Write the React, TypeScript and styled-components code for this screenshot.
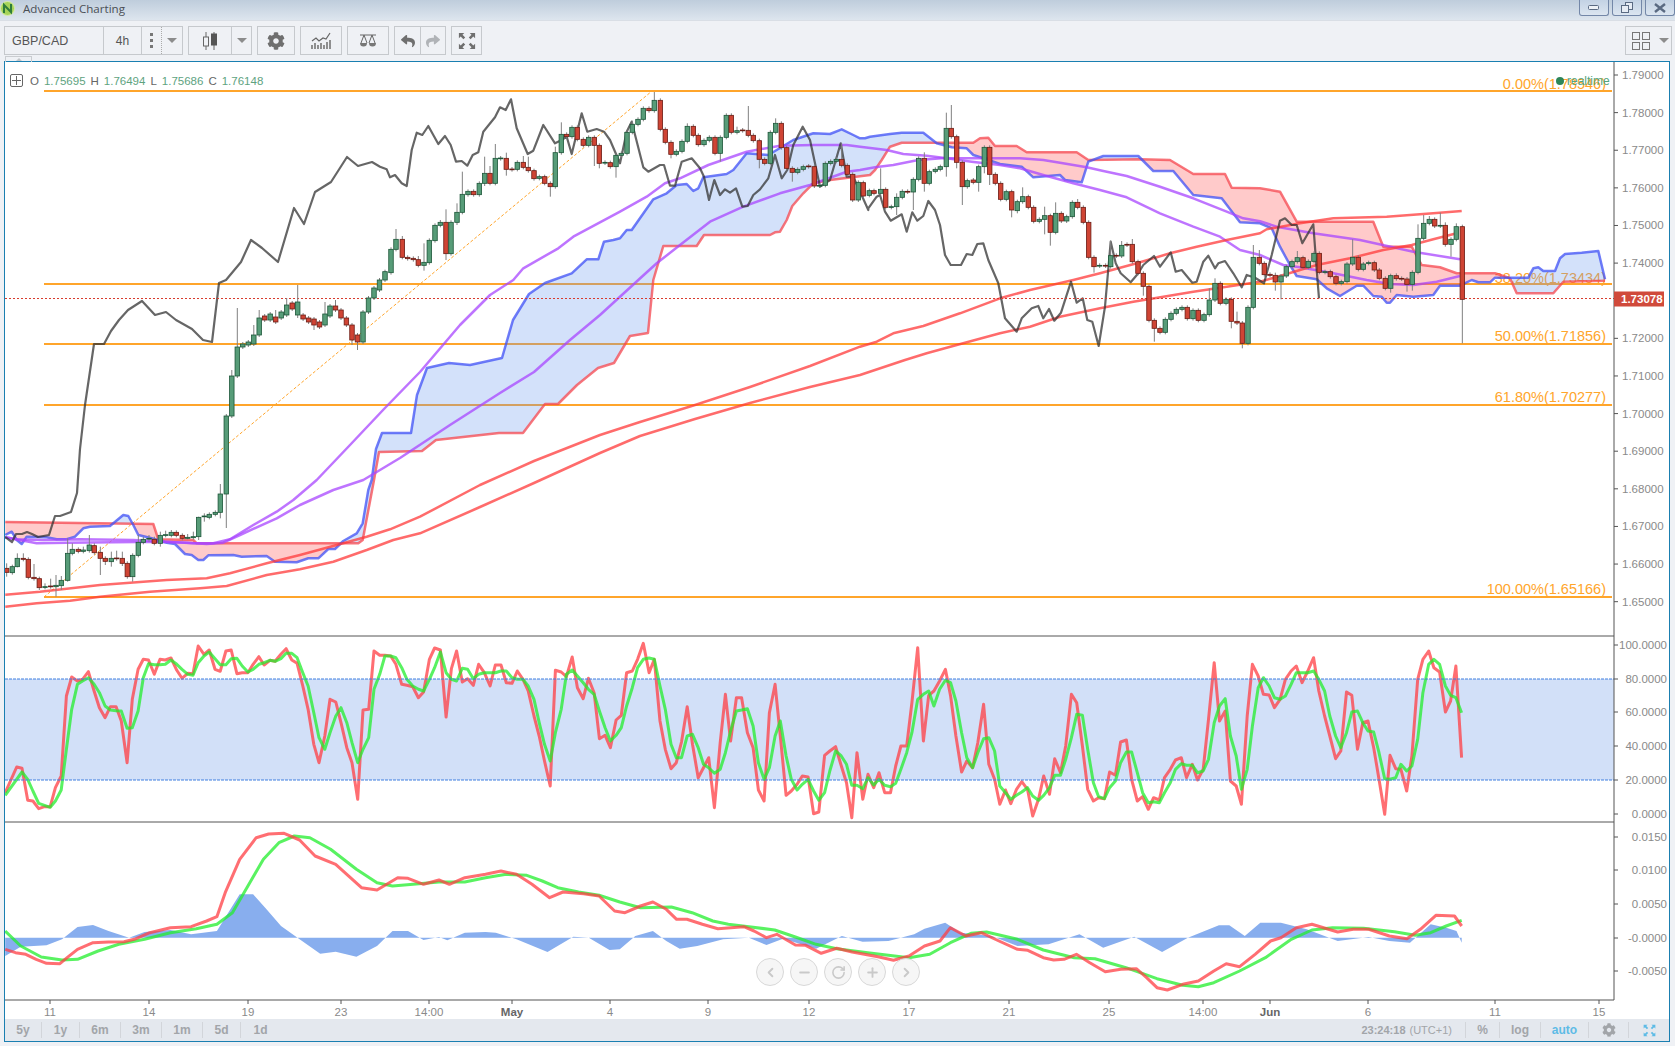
import React from 'react';
import styled, { createGlobalStyle } from 'styled-components';
import { ChevronLeft, ChevronRight, Minus, Plus, RotateCw } from 'lucide-react';
import { FaCog, FaReply, FaShare } from 'react-icons/fa';

type Pt = [number, number];

const GlobalStyle = createGlobalStyle`
  html, body { margin: 0; padding: 0; background: #eff1f5; overflow: hidden; }
  body { font-family: "Liberation Sans", Arial, sans-serif; }
`;

/* ---------- traced series: each block was read off at its own scale ---------- */
const tr = (x0: number, y0: number, sx: number, sy: number) => (s: string): Pt[] =>
  s.trim().split(/\s+/).map((p) => {
    const [x, y] = p.split(',').map(Number);
    return [x0 + x * sx, y0 + y * sy] as Pt;
  });

const Z7 = tr(0, 480, 1 / 3, 1 / 3);
const Z8 = tr(380, 80, 1 / 3, 1 / 3);
const Z11 = tr(860, 90, 1 / 3, 1 / 3);
const Z3 = tr(1200, 190, 1 / 3, 1 / 3);
const RAW = tr(0, 0, 1, 1);
const S1 = tr(0, 636, 1 / 1.912, 1 / 3);
const S2 = tr(800, 636, 1 / 1.912, 1 / 3);
const M = tr(0, 826, 1.033, 1 / 3);

const spanBlue: Pt[] = [
  ...Z7('16,165 35,155 50,180 65,192 80,170 140,172 170,178 200,178 225,170 250,145 270,140 330,138 370,105 385,108 400,135 415,165 455,175 500,188 525,192 555,222 575,225 595,240 610,240 625,226 700,225 725,230 800,228 825,245 890,247 925,235 955,235 985,207 1005,207 1030,183 1070,160 1088,130 1105,30 1115,0'),
  ...RAW('376,449 382,433 411,433 417,395 427,368 449,363 470,365 502,358 513,320 529,294 545,283'),
  ...Z8('520,600 575,580 620,538 655,538 672,485 700,480 720,475 740,450 755,450 820,358 860,340 890,315 920,312 940,333 955,325 970,292 1040,282 1060,270 1100,220 1165,225 1190,210 1240,180 1300,160 1350,162 1385,148 1420,165'),
  ...Z11('0,145 15,145 30,140 90,132 125,128 190,128 230,160 275,172 320,175 340,195 370,205 420,222 485,230 520,262 600,255 615,270 665,277 685,215 730,198 835,198 880,243 940,243 1000,315 1085,325 1140,397 1200,400'),
  ...Z3('215,115 240,170 270,225 290,258 350,268 380,295 420,318 470,287 490,287 520,318 545,320 560,338 570,338 590,315 640,320 700,315 720,287 780,287 815,270 835,277 870,277 885,263 985,263 1000,235 1015,232 1030,243 1065,243 1080,205 1095,192 1145,188 1195,183 1215,268'),
];

const spanRed: Pt[] = [
  ...Z7('16,126 460,132 475,178 580,180 590,190 1075,190 1088,180 1122,0'),
  ...RAW('379,452 422,451 436,440 499,433 523,433 545,404 558,404 577,385 598,368 614,363 630,336 648,333'),
  ...Z8('820,600 850,498 950,498 972,465 1170,465 1185,457 1200,455 1220,420 1237,378 1270,340 1300,310 1350,300 1470,285'),
  ...Z11('45,240 65,210 90,170 125,158 340,158 360,145 385,143 405,168 470,168 500,187 650,187 685,210 840,208 930,210 1000,252 1095,252 1115,293 1200,295'),
  ...Z3('240,5 290,95 520,95 550,170 635,170 665,225 720,232 770,250 885,250 930,265 950,310 1060,310 1090,275 1215,272'),
];

const maPurpleA: Pt[] = [
  ...Z7('16,172 50,178 130,180 240,178 400,180 500,185 580,190 640,190 690,178 760,135 830,95 880,60 950,0'),
  ...RAW('350,445 384,409 420,372 460,325 490,295'),
  ...Z8('400,600 430,565 535,505 580,470 720,395 800,350 855,310 900,295 985,255 1100,215 1200,197 1300,195 1400,195'),
  ...Z11('0,170 80,180 130,192 200,197 260,205 335,215 420,225 480,235 550,255 640,280 720,300 800,322 900,370 1000,410 1080,440 1140,480'),
  ...Z3('180,195 250,225 300,232 400,250 500,270 570,282 640,285 710,275 780,258'),
];

const maPurpleB: Pt[] = [
  ...Z7('16,172 110,190 200,188 480,185 560,188 620,192 670,188 720,165 830,115 900,75 1000,30 1090,0'),
  ...RAW('400,458 450,425 500,393 534,372 570,340 600,315'),
  ...Z8('775,600 830,550 900,495 990,425 1090,380 1200,340 1290,315 1400,275'),
  ...Z11('0,240 45,232 100,225 175,210 245,205 335,205 420,205 480,205 550,210 600,218 680,232 730,243 800,258 900,290 1000,325 1100,365 1150,385'),
  ...Z3('180,94 230,110 340,130 480,150 640,185 780,208'),
];

const maRedA: Pt[] = [
  ...Z7('16,344 120,335 300,315 500,300 620,295 690,280 800,250 900,225 1010,195 1100,170 1170,148 1260,110'),
  ...RAW('480,485 534,461 600,435 640,422 695,405 750,387 810,366'),
  ...Z11('0,770 50,755 100,730 190,708 300,670 420,625 510,600 640,570 720,550 830,520 930,490 1010,470 1100,450 1200,430'),
  ...Z3('200,118 300,100 400,85 560,80 700,70 785,63'),
];

const maRedB: Pt[] = [
  ...Z7('16,380 110,370 210,362 300,350 450,335 600,325 680,318 800,285 900,268 1000,245 1100,210 1180,180 1260,160'),
  ...RAW('480,507 534,483 600,453 640,436 695,419 750,403 810,387 860,375'),
  ...Z11('135,810 200,790 290,765 420,730 510,710 600,680 720,655 820,635 1000,605 1100,590 1200,575'),
  ...Z3('250,255 350,225 450,205 550,180 635,165 700,148 770,130'),
];

const lagging: Pt[] = [
  ...RAW('5,537 12,542 16,534 22,534 27,532 32,534 38,537 49,535 55,516 60,516 71,512 77,493 80,449 85,405 94,344 104,344 111,331 119,320 128,310 142,301 155,315 166,312 176,320 192,329 203,340 212,342 219,283 226,280 241,262 251,240 262,248 278,262 294,208 304,224 315,192 331,182 347,157 358,166 372,162'),
  ...Z8('0,260 20,268 30,292 45,285 65,310 80,318 95,210 110,158 127,165 145,138 175,192 195,168 212,195 228,245 245,243 262,257 278,225 295,217 310,155 345,112 360,82 377,90 393,58 410,145 443,222 460,212 490,135 525,190 545,180 560,170 575,222 605,100 622,155 650,147 672,155 690,180 720,250 740,155 755,125 790,262 805,275 840,255 852,255 870,317 885,317 905,245 935,235 960,265 972,290 987,360 1003,300 1020,345 1035,328 1050,338 1068,325 1087,380 1103,378 1120,345 1140,328 1165,295 1185,225 1205,295 1222,270 1240,195 1268,140 1290,180 1305,250 1320,320 1350,300 1382,190 1400,290 1420,290 1465,390'),
  ...Z11('25,355 50,320 60,315 75,365 92,392 125,373 140,425 157,367 172,392 190,378 205,333 225,360 240,405 255,495 272,525 303,525 320,492 337,495 352,462 370,460 385,510 415,580 435,685 470,725 485,685 515,655 535,648 550,685 567,657 583,692 603,668 633,575 650,638 668,625 682,690 697,695 716,768 735,650 752,455 767,520 782,550 812,577 835,550 850,525 882,498 900,530 932,487 947,545 965,540 997,578 1010,575 1030,515 1045,497 1065,535 1075,520 1095,513 1120,550 1145,592'),
  ...Z3('140,255 165,263 192,280 215,195 240,92 255,85 275,105 290,105 307,160 340,103 350,240 357,325'),
];

const stochRed: Pt[] = [
  ...S1('10,470 32,393 42,397 53,493 63,495 74,518 85,512 96,512 106,455 117,420 127,180 137,123 148,135 158,130 169,107 180,165 190,215 201,245 211,212 222,212 232,255 243,380 253,190 264,100 274,70 284,72 295,115 306,70 316,72 327,66 338,103 348,127 359,112 369,113 379,30 390,55 400,42 411,100 421,106 432,45 442,42 453,113 463,110 474,110 484,85 495,62 505,87 516,73 526,76 537,55 547,38 558,72 568,82 579,150 589,220 600,325 610,380 621,300 631,190 642,198 652,260 663,335 673,380 684,490 694,222 705,220 715,45 726,58 736,58 747,60 757,85 768,145 778,148 789,152 800,185 810,168 821,70 831,36 842,42 853,243 863,98 873,45 884,138 894,128 905,148 915,85 926,110 937,150 947,87 958,87 968,140 979,142 989,105 1000,130 1010,165 1021,240 1031,300 1041,375 1052,450 1062,103 1073,108 1083,122 1094,63 1104,155 1115,188 1125,127 1136,170 1146,308 1157,298 1167,335 1178,252 1188,238 1198,110 1209,105 1219,70 1230,22 1241,110 1251,70 1262,255 1272,340 1283,398 1293,380 1303,318 1314,212 1324,325 1335,425 1345,395 1355,365 1366,515 1377,320 1387,175 1397,315 1408,185 1418,185 1429,290 1440,335 1450,462 1461,495 1471,230 1482,145 1492,300 1503,478 1513,465 1524,445 1534,420 1545,423'),
  ...S2('26,533 36,528 47,358 57,345 68,332 78,385 89,440 99,545 109,350 120,490 130,415 141,455 151,410 162,470 173,470 183,390 193,330 204,330 214,200 225,35 236,315 246,178 256,165 267,135 278,100 288,180 298,300 309,408 319,375 330,395 340,320 351,205 361,385 372,430 382,505 393,462 403,503 414,460 424,437 435,460 445,540 456,490 466,420 477,475 487,368 498,410 508,330 519,175 529,200 540,330 550,460 561,495 571,485 582,488 592,408 603,418 613,318 624,312 634,430 645,495 655,482 666,520 676,485 687,492 697,425 708,400 718,372 729,365 739,425 750,385 760,432 771,400 781,250 792,80 802,255 813,225 823,435 834,450 844,505 855,240 865,85 876,120 886,175 897,177 907,215 918,190 928,130 939,105 949,90 960,140 971,105 982,65 992,165 1003,240 1013,300 1024,368 1034,345 1045,168 1055,178 1066,340 1076,260 1086,255 1097,335 1107,430 1118,535 1128,358 1139,398 1149,400 1160,465 1170,360 1181,130 1191,70 1202,45 1212,95 1223,108 1234,228 1244,195 1254,90 1265,365'),
];

const stochGreen: Pt[] = [
  ...S1('10,478 42,408 53,430 63,465 74,502 85,508 96,514 106,495 117,462 127,340 137,220 148,145 158,135 169,125 180,145 190,170 201,210 211,222 222,224 232,225 243,277 253,275 264,225 274,125 284,83 295,86 306,86 316,85 327,72 338,85 348,100 359,115 369,118 379,80 390,60 400,48 411,68 421,86 432,86 442,68 453,67 463,90 474,108 484,100 495,85 505,80 516,73 526,76 537,68 547,52 558,52 568,65 579,110 589,150 600,230 610,305 621,340 631,290 642,240 652,215 663,260 673,320 684,380 694,340 705,305 715,160 726,115 736,60 747,60 757,65 768,95 778,130 789,150 800,160 810,165 821,130 831,95 842,48 853,110 863,130 873,135 884,97 894,100 905,128 915,115 926,110 937,110 947,110 958,105 968,105 979,125 989,130 1000,130 1010,150 1021,190 1031,260 1041,325 1052,375 1062,290 1073,220 1083,115 1094,102 1104,120 1115,140 1125,160 1136,175 1146,225 1157,275 1167,315 1178,298 1188,275 1198,210 1209,155 1219,95 1230,70 1241,66 1251,70 1262,150 1272,220 1283,325 1293,365 1303,365 1314,300 1324,295 1335,335 1345,385 1355,395 1366,412 1377,400 1387,350 1397,285 1408,225 1418,222 1429,218 1440,270 1450,380 1461,430 1471,395 1482,300 1492,255 1503,360 1513,430 1524,462 1534,445 1545,430'),
  ...S2('26,465 36,493 47,470 57,405 68,345 78,358 89,385 99,448 109,448 120,458 130,425 141,447 151,430 162,448 173,452 183,442 193,400 204,350 214,290 225,190 236,175 246,165 256,210 267,160 278,133 288,140 298,195 309,290 319,365 330,395 340,350 351,308 361,305 372,345 382,450 393,470 403,490 414,478 424,468 435,455 445,480 456,493 466,478 477,455 487,418 498,418 508,370 519,305 529,235 540,238 550,340 561,440 571,482 582,488 592,455 603,435 613,380 624,348 634,348 645,410 655,470 666,500 676,497 687,500 697,470 708,440 718,400 729,383 739,388 750,388 760,410 771,405 781,370 792,260 802,210 813,188 823,300 834,360 844,460 855,400 865,270 876,155 886,125 897,150 907,185 918,190 928,180 939,145 949,110 960,110 971,110 982,105 992,130 1003,165 1013,240 1024,300 1034,335 1045,290 1055,228 1066,225 1076,260 1086,285 1097,288 1107,350 1118,428 1128,430 1139,425 1149,385 1160,405 1170,390 1181,310 1191,170 1202,85 1212,70 1223,85 1234,150 1244,178 1254,185 1265,230'),
];

const macdRed = M('5,370 15,380 25,385 35,400 45,412 58,413 65,395 75,370 90,350 105,348 120,347 130,340 145,320 165,305 185,302 200,285 210,272 218,200 232,100 248,35 260,24 275,22 290,42 305,90 325,115 350,185 365,192 385,155 395,157 410,175 425,162 435,175 450,155 470,145 485,135 500,145 515,175 532,215 545,198 565,203 580,210 595,255 605,260 620,240 632,228 645,250 655,280 665,280 680,295 695,308 720,302 730,315 742,335 752,325 770,357 780,358 795,382 810,367 825,378 850,392 865,403 880,390 895,360 910,345 920,305 935,330 950,320 965,342 985,370 995,373 1010,395 1020,402 1030,400 1042,385 1055,410 1070,437 1085,430 1100,428 1110,455 1120,485 1130,492 1145,475 1160,465 1175,435 1187,413 1200,422 1215,385 1230,345 1240,335 1255,305 1270,295 1295,318 1310,310 1325,310 1345,330 1362,338 1375,310 1390,268 1408,270 1415,300');
const macdGreen = M('5,315 20,360 40,393 60,402 75,400 95,375 115,355 140,340 165,320 190,308 210,295 225,260 240,180 255,100 270,50 285,30 300,35 320,70 345,130 365,170 380,180 400,175 425,168 450,168 470,155 490,145 510,148 525,165 540,185 560,198 580,208 600,228 620,245 650,243 670,260 690,285 705,295 725,302 750,312 770,333 790,355 810,368 840,380 860,388 880,395 900,385 920,350 940,322 955,318 985,340 1010,372 1040,395 1060,398 1090,425 1120,458 1145,478 1160,482 1175,470 1200,435 1225,395 1250,340 1270,312 1290,305 1320,307 1350,317 1370,328 1385,320 1400,300 1415,283');
const macdHist = M('5,335 5,390 20,362 45,358 60,340 75,303 90,297 105,315 125,335 140,318 165,312 185,325 210,315 222,255 232,205 245,205 258,250 272,300 290,340 310,383 325,377 345,392 365,360 380,315 395,315 410,342 425,333 433,343 450,320 470,318 480,320 500,340 530,378 555,332 570,335 590,372 600,370 615,330 632,315 645,345 658,368 675,360 700,340 725,335 742,357 758,338 790,368 815,330 835,347 860,345 885,325 895,308 915,290 930,320 960,330 985,360 1015,355 1045,325 1068,365 1098,332 1125,378 1150,335 1180,298 1190,298 1205,330 1220,290 1240,290 1265,310 1295,345 1325,333 1345,345 1365,350 1385,295 1400,305 1410,315 1415,350 1415,335');

/* x kind top bottom [high low], rows separated by | */
type Candle = { x: number; up: boolean; top: number; bottom: number; high: number; low: number };

const candles = (x0: number, y0: number, k: number, rows: string): Candle[] =>
  rows.trim().split('|').map((row) => {
    const [x, kind, t, b, h, l] = row.trim().split(/\s+/);
    const top = y0 + Number(t) * k;
    const bottom = y0 + Number(b) * k;
    return {
      x: x0 + Number(x) * k,
      up: kind === 'g',
      top,
      bottom,
      high: h && h !== '-' ? y0 + Number(h) * k : top - 2,
      low: l && l !== '-' ? y0 + Number(l) * k : bottom + 2,
    };
  });

const allCandles: Candle[] = [
  ...candles(0, 480, 1 / 3, `20 r 265 277 250 290|37 g 260 278|52 g 235 260 220 262|70 r 235 238 220 -|85 r 238 292|102 r 292 296 252 -|118 r 296 323 - 330|135 g 320 322 310 328|152 r 318 320 296 -|168 g 316 320 285 350|184 g 301 317 288 330|203 g 220 301 175 305|217 g 208 220 190 -|235 r 208 214|250 g 210 214 200 -|268 g 195 212 165 -|283 r 197 218 190 -|301 r 217 235 200 285|316 r 235 244 - 255|334 g 235 245 215 260|350 r 234 236 212 -|367 r 235 250 215 258|382 r 250 290|398 g 226 290 - 305|415 g 187 226 165 -|430 g 178 187 170 -|447 g 175 177 165 185|463 r 178 190 170 -|481 g 166 190 155 200|497 g 164 166 152 -|514 g 157 166 150 -|529 r 157 166|547 r 166 175 160 -|563 g 172 175 162 178|580 g 170 173 155 -|596 g 112 170 110 180|613 g 108 110 100 125|628 g 103 112|646 g 97 103|661 g 42 97 12 115`),
  ...candles(0, 0, 1, `226.3 g 416 494 414 528|231.8 g 376 416 370 -|237.3 g 347 376 308 -|242.8 g 344 347|248.3 g 342 345|253.8 g 335 344 325 -|259.2 g 318 335 310 -|264.7 r 316 320|270.2 g 314 320|275.7 r 317 322 310 -|281.2 g 312 318|286.7 g 305 315 298 -|292.2 r 303 309|297.7 g 302 315 285 318|303.1 r 315 319|308.6 r 318 322|314 r 319 325 - 330|319.5 r 322 327|325 g 314 325 302 -|330 g 306 316|335.5 r 306 310 300 -|341 r 310 318|346.4 r 318 325|352 r 325 340 - 345|357.5 r 335 342 - 350|363 g 312 342|368.5 g 298 312|374 g 288 298|379.5 g 280 290`),
  ...candles(380, 80, 1 / 3, `15 g 575 600|33 g 508 578|48 g 478 508 447 -|67 r 478 532 468 -|83 r 532 536|100 r 535 539|115 r 539 556 528 -|132 g 547 556 490 572|148 g 481 548|165 g 436 482|181 g 427 436 420 -|198 r 427 521 388 540|213 g 427 521|231 g 397 427 370 435|247 g 343 397 275 -|264 g 334 344|281 r 334 344|298 g 310 344|314 g 280 310 230 318|330 r 280 310 258 -|346 g 235 310 192 -|362 g 234 236|379 r 235 268 218 287|396 r 267 269|412 g 247 268|430 r 247 262 228 -|445 r 262 272 230 -|462 r 272 296|478 g 290 295|494 r 290 310|511 r 310 320 - 350|526 g 218 320 200 -|544 g 163 218 127 -|560 r 163 170|576 g 142 170|592 r 142 178|610 r 178 196|626 g 172 196|643 r 172 196 - 258|658 r 196 250 - 265|675 g 247 249|691 r 248 260|708 g 226 260 - 293|724 g 220 226|741 g 157 220|757 g 133 157 122 -|774 g 118 133|790 g 85 118|807 r 85 92|823 g 61 92 36 -|841 r 61 148|856 r 148 187|873 r 187 223 - 235|889 g 214 223|906 g 184 214|922 g 139 184 130 -|940 r 139 166|955 r 166 194|972 g 181 194|988 g 172 181|1005 r 172 220|1021 g 172 220 - 245|1039 g 106 172|1054 r 106 157|1071 g 152 157 140 -|1088 r 150 152|1105 r 151 166 78 -|1120 r 166 182|1138 r 182 238 - 265|1154 r 238 250|1171 g 157 250|1187 g 130 157 115 -|1204 r 130 203|1220 r 203 265|1237 r 265 277 - 305|1253 g 268 277|1270 g 260 268|1286 r 258 260|1303 r 260 318|1319 g 316 318|1336 g 250 316|1352 g 244 250|1369 g 238 244|1385 r 238 256 190 -|1402 r 256 283|1418 r 283 360|1435 g 307 360`),
  ...candles(860, 90, 1 / 3, `10 r 278 318|28 g 302 316|42 r 302 310|62 g 298 310 235 -|77 r 298 352|94 g 350 352|110 g 322 350 310 375|127 g 304 322|143 r 304 306|160 g 268 306 - 360|176 g 205 268|193 r 205 280 187 305|208 g 245 280|226 g 238 244|241 g 230 238|259 g 115 230 68 260|274 r 115 140 45 -|290 r 140 217 - 235|307 r 217 290 - 345|322 g 272 290|340 r 270 277|356 g 230 277 - 305|373 g 172 230 - 250|389 r 172 253 - 285|406 r 253 280|422 r 280 328|439 g 305 328|455 r 305 360 - 382|472 g 335 362 - 370|488 g 320 335 292 -|505 r 320 352|521 r 352 394|538 g 388 394|554 g 377 388 350 433|571 r 377 427 - 467|587 g 370 427 337 -|604 r 370 393|620 g 380 393|637 g 337 380|653 r 337 352 327 -|670 r 352 397|686 r 397 502|702 r 502 530 - 548|719 g 526 528|737 r 526 528|752 g 497 530 452 -|769 r 496 498|785 g 466 498 453 -|801 r 463 465|817 r 463 515 447 -|834 r 515 550|850 r 550 589 - 617|867 r 589 691|883 r 691 715 - 755|900 r 715 727|916 g 688 727|933 g 670 688|949 g 658 670|966 g 652 658|982 r 652 686|999 g 661 686|1015 r 661 691|1032 g 674 691|1048 g 630 674 595 -|1065 g 580 630 565 -|1081 r 580 640|1098 g 628 640|1114 r 628 694 - 715|1131 r 694 699 665 -|1147 r 699 760 - 775|1164 g 652 760|1180 g 502 652 465 -`),
  ...candles(1200, 190, 1 / 3, `178 r 202 220 180 -|193 r 220 254|210 r 253 256|226 r 256 276 248 302|243 g 258 276 - 328|259 g 230 258|276 g 215 230|292 g 203 215 183 -|309 r 203 232|325 g 214 232|342 g 190 214|358 r 190 247|375 g 245 247|391 r 245 260|408 r 260 280|424 g 275 280|441 g 222 275|458 g 202 222 148 -|475 r 202 238|490 g 222 238|506 g 218 220|523 r 218 240|538 r 240 265|556 r 265 295|572 g 257 295 - 308|589 r 257 266 250 -|605 r 265 267|621 r 267 283 - 305|637 g 247 283 - 302|654 g 145 247 103 -|671 g 100 145 75 -|688 g 88 100 78 -|704 r 88 108|721 g 106 108 68 -|736 r 106 163 97 170|753 g 148 163 - 200|769 g 110 148 100 -|787 r 110 328 - 460`),
];

/* ---------- cloud fill between the two spans, split where they cross ---------- */
const yAt = (line: Pt[], x: number) => {
  for (let i = 1; i < line.length; i++) {
    if (x <= line[i][0]) {
      const [x1, y1] = line[i - 1];
      const [x2, y2] = line[i];
      return x2 === x1 ? y2 : y1 + ((y2 - y1) * (x - x1)) / (x2 - x1);
    }
  }
  return line[line.length - 1][1];
};

const cloudRuns = (a: Pt[], b: Pt[]) => {
  const runs: { blue: boolean; points: string }[] = [];
  const end = Math.min(a[a.length - 1][0], b[b.length - 1][0]);
  let blue: boolean | null = null;
  let upper: Pt[] = [];
  let lower: Pt[] = [];
  const flush = () => {
    if (upper.length > 1) {
      runs.push({ blue: !!blue, points: [...upper, ...[...lower].reverse()].map((p) => p.join(',')).join(' ') });
    }
  };
  for (let x = Math.max(a[0][0], b[0][0]); x <= end; x += 1) {
    const ya = yAt(a, x);
    const yb = yAt(b, x);
    const isBlue = ya < yb;
    if (blue !== isBlue) {
      flush();
      upper = upper.slice(-1);
      lower = lower.slice(-1);
      blue = isBlue;
    }
    upper.push([x, ya]);
    lower.push([x, yb]);
  }
  flush();
  return runs;
};

const toPoints = (pts: Pt[]) => pts.map((p) => `${p[0].toFixed(1)},${p[1].toFixed(1)}`).join(' ');

/* ---------- axes ---------- */
const priceTicks = ['1.79000', '1.78000', '1.77000', '1.76000', '1.75000', '1.74000', '1.73000', '1.72000', '1.71000', '1.70000', '1.69000', '1.68000', '1.67000', '1.66000', '1.65000'];
const fibLines = [
  { y: 91, label: '0.00%(1.78546)', base: 89 },
  { y: 284, label: '38.20%(1.73434)', base: 283 },
  { y: 344, label: '50.00%(1.71856)', base: 341 },
  { y: 405, label: '61.80%(1.70277)', base: 402 },
  { y: 597, label: '100.00%(1.65166)', base: 594 },
];
const stochTicks = [
  { y: 645, label: '100.0000' },
  { y: 679, label: '80.0000' },
  { y: 712, label: '60.0000' },
  { y: 746, label: '40.0000' },
  { y: 780, label: '20.0000' },
  { y: 814, label: '0.0000' },
];
const macdTicks = [
  { y: 837, label: '0.0150' },
  { y: 870, label: '0.0100' },
  { y: 904, label: '0.0050' },
  { y: 938, label: '-0.0000' },
  { y: 971, label: '-0.0050' },
];
const timeTicks = [
  { x: 50, label: '11' },
  { x: 149, label: '14' },
  { x: 248, label: '19' },
  { x: 341, label: '23' },
  { x: 429, label: '14:00' },
  { x: 512, label: 'May', strong: true },
  { x: 610, label: '4' },
  { x: 708, label: '9' },
  { x: 809, label: '12' },
  { x: 909, label: '17' },
  { x: 1009, label: '21' },
  { x: 1109, label: '25' },
  { x: 1203, label: '14:00' },
  { x: 1270, label: 'Jun', strong: true },
  { x: 1368, label: '6' },
  { x: 1495, label: '11' },
  { x: 1599, label: '15' },
];

/* ---------- styled parts ---------- */
const Page = styled.div`
  width: 1675px;
  height: 1046px;
  display: flex;
  flex-direction: column;
  background: #eff1f5;
`;

const TitleBar = styled.header`
  height: 20px;
  flex: none;
  display: flex;
  align-items: flex-start;
  border-bottom: 1px solid #d9dee5;
  background: linear-gradient(#bfcddc, #dde5ee);
`;

const AppLogo = styled.svg`
  width: 15px;
  height: 15px;
  margin: 1px 8px 0 0;
`;

const TitleText = styled.span`
  font: 11.6px/17px "Open Sans", sans-serif;
  color: #4a4f55;
`;

const WindowButtons = styled.div`
  margin-left: auto;
  display: flex;
  gap: 3px;
`;

const WindowButton = styled.button`
  width: 30px;
  height: 16px;
  padding: 0;
  display: flex;
  align-items: center;
  justify-content: center;
  border: 1px solid #7387a8;
  border-top: 0;
  border-radius: 0 0 3px 3px;
  background: linear-gradient(#c3d2e4, #dbe5f0);
`;

const Toolbar = styled.div`
  height: 40px;
  flex: none;
  box-sizing: border-box;
  padding: 5px 3px 0 4px;
  display: flex;
  align-items: flex-start;
  gap: 5px;
`;

const ToolGroup = styled.div<{ $right?: boolean }>`
  display: flex;
  height: 29px;
  box-sizing: border-box;
  border: 1px solid #c6c9cd;
  margin-left: ${(p) => (p.$right ? 'auto' : '0')};
`;

const ToolCell = styled.div<{ $w: number; $strong?: boolean }>`
  width: ${(p) => p.$w}px;
  box-sizing: border-box;
  display: flex;
  align-items: center;
  justify-content: center;
  color: ${(p) => (p.$strong ? '#6f6f6f' : '#555')};
  font: 12px "Liberation Sans", sans-serif;
  & + & {
    border-left: 1px solid #c6c9cd;
  }
`;

const SymbolCell = styled(ToolCell)`
  justify-content: flex-start;
  padding-left: 7px;
  font: 12.5px "Liberation Sans", sans-serif;
  color: #555;
`;

const DotsCell = styled(ToolCell)`
  flex-direction: column;
  gap: 3px;
  border-right: 1px dotted #aaa;
`;

const Dot = styled.i`
  width: 3px;
  height: 3px;
  background: #777;
  display: block;
`;

const Caret = styled.i`
  width: 0;
  height: 0;
  border-left: 5px solid transparent;
  border-right: 5px solid transparent;
  border-top: 5px solid #8c8c8c;
  display: block;
`;

const CaretCell = styled.div<{ $w: number }>`
  width: ${(p) => p.$w}px;
  display: flex;
  align-items: center;
  justify-content: center;
`;

const ChartFrame = styled.section`
  position: relative;
  width: 1666px;
  height: 981px;
  flex: none;
  margin-left: 4px;
  box-sizing: border-box;
  border: 1px solid #1a7fb1;
  background: #fff;
`;

const PaneTab = styled.div`
  position: absolute;
  left: 0;
  top: -6px;
  width: 25px;
  height: 5px;
  border: 1px solid #c9ccd0;
  border-bottom: 0;
  display: flex;
  justify-content: center;
  &::after {
    content: '';
    margin-top: 1px;
    border-left: 3px solid transparent;
    border-right: 3px solid transparent;
    border-bottom: 3px solid #c2c5c9;
    height: 0;
  }
`;

const ChartSvg = styled.svg`
  display: block;
  width: 1664px;
  height: 957px;
`;

const PriceText = styled.text`
  font: 11.5px "Liberation Sans", sans-serif;
  fill: #8a8a8a;
`;

const TimeText = styled.text<{ $strong?: boolean }>`
  font: ${(p) => (p.$strong ? 'bold' : 'normal')} 11.5px "Liberation Sans", sans-serif;
  fill: ${(p) => (p.$strong ? '#666' : '#8a8a8a')};
  text-anchor: middle;
`;

const FibText = styled.text`
  font: 14.5px "Liberation Sans", sans-serif;
  fill: #ffa52b;
  text-anchor: end;
`;

const LastPriceText = styled.text`
  font: bold 11.5px "Liberation Sans", sans-serif;
  fill: #fff;
`;

const Legend = styled.div`
  position: absolute;
  left: 5px;
  top: 12px;
  display: flex;
  align-items: center;
  gap: 5px;
  font: 11.5px "Liberation Sans", sans-serif;
  color: #666;
`;

const LegendToggle = styled.span`
  width: 11px;
  height: 11px;
  margin-right: 2px;
  position: relative;
  border: 1px solid #666;
  border-radius: 2px;
  &::before,
  &::after {
    content: '';
    position: absolute;
    background: #666;
  }
  &::before { left: 1px; right: 1px; top: 5px; height: 1px; }
  &::after { top: 1px; bottom: 1px; left: 5px; width: 1px; }
`;

const LegendValue = styled.span`
  color: #5ea37f;
`;

const Realtime = styled.div`
  position: absolute;
  left: 1551px;
  top: 12px;
  display: flex;
  align-items: center;
  gap: 3px;
  font: 12px "Liberation Sans", sans-serif;
  color: #55a57e;
  &::before {
    content: '';
    width: 8px;
    height: 8px;
    border-radius: 50%;
    background: #2e8659;
  }
`;

const ZoomControls = styled.div`
  position: absolute;
  left: 751px;
  top: 896px;
  display: flex;
  gap: 6px;
`;

const ZoomButton = styled.button`
  width: 28px;
  height: 28px;
  padding: 0;
  display: flex;
  align-items: center;
  justify-content: center;
  border: 1px solid #d8d8d8;
  border-radius: 50%;
  background: #f6f6f6;
  color: #c9c9c9;
`;

const RangeBar = styled.footer`
  height: 22px;
  display: flex;
  align-items: center;
  background: #e4e8ee;
`;

const RangeItem = styled.span<{ $w: number; $active?: boolean; $last?: boolean }>`
  width: ${(p) => p.$w}px;
  height: 16px;
  flex: none;
  display: flex;
  align-items: center;
  justify-content: center;
  box-sizing: border-box;
  font: bold 12px "Liberation Sans", sans-serif;
  color: ${(p) => (p.$active ? '#5dbbe6' : '#a2a5a9')};
  border-right: ${(p) => (p.$last ? '0' : '1px solid #d2d5da')};
`;

const ClockItem = styled.span`
  margin-left: auto;
  height: 16px;
  display: flex;
  align-items: center;
  gap: 4px;
  padding-right: 13px;
  font: 11px "Liberation Sans", sans-serif;
  color: #a2a5a9;
  border-right: 1px solid #d2d5da;
`;

const ranges = [
  { label: '5y', w: 37 },
  { label: '1y', w: 38 },
  { label: '6m', w: 41 },
  { label: '3m', w: 41 },
  { label: '1m', w: 41 },
  { label: '5d', w: 38 },
  { label: '1d', w: 39 },
];

/* ---------- drawings ---------- */
const CandleIcon = () => (
  <svg width="16" height="20" viewBox="0 0 16 20">
    <path d="M4 1v18M12 1v18" stroke="#666" strokeWidth="1" fill="none" />
    <rect x="1.500" y="6" width="5" height="9" fill="#f0f2f6" stroke="#666" />
    <rect x="9.500" y="3" width="5" height="11" fill="#555" stroke="#555" />
  </svg>
);

const IndicatorIcon = () => (
  <svg width="20" height="18" viewBox="0 0 20 18">
    <path d="M1 9l4-3 3 3 4-3 3 1 4-6" stroke="#666" strokeWidth="1.200" fill="none" />
    <path d="M1 13v4M4 11v6M7 13v4M10 11v6M13 13v4M16 10v7M19 8v9" stroke="#777" strokeWidth="1.600" />
  </svg>
);

const ScalesIcon = () => (
  <svg width="18" height="16" viewBox="0 0 18 16">
    <path d="M1 2h16M5 2L2 10M5 2l3 8M13 2l-3 8M13 2l3 8" stroke="#666" strokeWidth="1" fill="none" />
    <path d="M1 10h7a3.500 3.500 0 0 1-7 0zM10 10h7a3.500 3.500 0 0 1-7 0z" fill="#777" />
  </svg>
);

const CornersIcon = ({ color = '#6f6f6f', size = 20 }: { color?: string; size?: number }) => (
  <svg width={size} height={size} viewBox="0 0 20 20" fill={color}>
    <path d="M1 1h6L5 3l3 3-2 2-3-3-2 2zM19 1h-6l2 2-3 3 2 2 3-3 2 2zM1 19h6l-2-2 3-3-2-2-3 3-2-2zM19 19h-6l2-2-3-3 2-2 3 3 2-2z" />
  </svg>
);

const LayoutIcon = () => (
  <svg width="18" height="18" viewBox="0 0 18 18" fill="none" stroke="#777">
    <rect x="0.500" y="0.500" width="7" height="7" />
    <rect x="10.500" y="0.500" width="7" height="7" />
    <rect x="0.500" y="10.500" width="7" height="7" />
    <rect x="10.500" y="10.500" width="7" height="7" />
  </svg>
);

const Line = ({ pts, color, width = 2.5, opacity = 0.75 }: { pts: Pt[]; color: string; width?: number; opacity?: number }) => (
  <polyline points={toPoints(pts)} fill="none" stroke={color} strokeWidth={width} strokeOpacity={opacity} strokeLinejoin="round" />
);

const AxisTick = ({ x, y }: { x: number; y: number }) => <line x1={x} x2={x + 4} y1={y} y2={y} stroke="#555" />;

const Chart = () => (
  <ChartSvg viewBox="5 62 1664 957">
    <rect x="5" y="679" width="1609" height="101" fill="#d2e0f8" />

    {fibLines.map((f) => (
      <g key={f.y}>
        <line x1="44" x2="1612" y1={f.y} y2={f.y} stroke="#ffa52b" strokeWidth="2" />
        <FibText x="1606" y={f.base}>{f.label}</FibText>
      </g>
    ))}
    <line x1="44" y1="597" x2="652" y2="91" stroke="#ffa52b" strokeWidth="1" strokeDasharray="3 2" />

    {cloudRuns(spanBlue, spanRed).map((r, i) => (
      <polygon key={i} points={r.points} fill={r.blue ? 'rgba(96,146,236,0.28)' : 'rgba(255,90,90,0.32)'} />
    ))}
    <Line pts={spanRed} color="#f5474f" />
    <Line pts={spanBlue} color="#3f50f5" />
    <Line pts={maPurpleA} color="#a845ff" />
    <Line pts={maPurpleB} color="#a845ff" />
    <Line pts={maRedA} color="#ff3a3a" />
    <Line pts={maRedB} color="#ff3a3a" />
    <Line pts={lagging} color="#333" width={2.2} />

    <line x1="5" x2="1614" y1="298.500" y2="298.500" stroke="#d83b2d" strokeDasharray="2 2" />

    {allCandles.map((c, i) => (
      <g key={i}>
        <line x1={c.x} x2={c.x} y1={c.high} y2={c.low} stroke="#808080" />
        <rect
          x={c.x - 2.25}
          y={c.top}
          width="4.5"
          height={Math.max(c.bottom - c.top, 0.8)}
          fill={c.up ? '#579c78' : '#cf4434'}
          stroke={c.up ? '#1c5638' : '#6a1c14'}
          strokeWidth="0.8"
        />
      </g>
    ))}

    <Line pts={stochRed} color="#ff3d43" width={3} />
    <Line pts={stochGreen} color="#21ee2c" width={3} />
    <line x1="5" x2="1614" y1="679" y2="679" stroke="#3f7fe0" strokeDasharray="3 1" />
    <line x1="5" x2="1614" y1="780" y2="780" stroke="#3f7fe0" strokeDasharray="3 1" />

    <polygon points={toPoints(macdHist)} fill="#88aeee" />
    <Line pts={macdGreen} color="#21ee2c" width={3} />
    <Line pts={macdRed} color="#ff3d43" width={3} />

    <line x1="5" x2="1614" y1="636" y2="636" stroke="#555" />
    <line x1="5" x2="1614" y1="822" y2="822" stroke="#555" />
    <line x1="5" x2="1614" y1="1000" y2="1000" stroke="#555" />
    <line x1="1614" x2="1614" y1="62" y2="1000" stroke="#555" />

    {priceTicks.map((label, i) => {
      const y = 75 + i * 37.62;
      return (
        <g key={label}>
          <AxisTick x={1614} y={y} />
          <PriceText x="1622" y={y + 4}>{label}</PriceText>
        </g>
      );
    })}
    {[...stochTicks, ...macdTicks].map((t) => (
      <g key={t.y}>
        <AxisTick x={1614} y={t.y} />
        <PriceText x="1667" y={t.y + 4} textAnchor="end">{t.label}</PriceText>
      </g>
    ))}

    <rect x="1614" y="291.500" width="50" height="15" fill="#d04a3b" />
    <LastPriceText x="1621" y="303">1.73078</LastPriceText>

    {timeTicks.map((t) => (
      <g key={`${t.x}`}>
        <line x1={t.x} x2={t.x} y1="1000" y2="1004" stroke="#555" />
        <TimeText x={t.x} y="1016" $strong={t.strong}>{t.label}</TimeText>
      </g>
    ))}
  </ChartSvg>
);

export default function App() {
  return (
    <Page>
      <GlobalStyle />
      <TitleBar>
        <AppLogo viewBox="0 0 15 15">
          <circle cx="7.500" cy="7.500" r="7" fill="#a6d45a" stroke="#d8ecae" />
          <path d="M4 12V4l7 7V3" fill="none" stroke="#2f7d3a" strokeWidth="2" />
        </AppLogo>
        <TitleText>Advanced Charting</TitleText>
        <WindowButtons>
          <WindowButton>
            <svg width="12" height="6" viewBox="0 0 12 6"><rect x="0.500" y="0.500" width="10" height="4" rx="1" fill="#eef2f7" stroke="#5a6a82" /></svg>
          </WindowButton>
          <WindowButton>
            <svg width="13" height="12" viewBox="0 0 13 12" fill="#e6ecf4" stroke="#5a6a82"><rect x="4.500" y="0.500" width="7" height="7" /><rect x="0.500" y="3.500" width="7" height="7" /></svg>
          </WindowButton>
          <WindowButton>
            <svg width="12" height="10" viewBox="0 0 12 10"><path d="M1 1l10 8M11 1L1 9" stroke="#5a6a82" strokeWidth="2.400" /></svg>
          </WindowButton>
        </WindowButtons>
      </TitleBar>

      <Toolbar>
        <ToolGroup>
          <SymbolCell $w={98}>GBP/CAD</SymbolCell>
          <ToolCell $w={38}>4h</ToolCell>
          <DotsCell $w={21}><Dot /><Dot /><Dot /></DotsCell>
          <CaretCell $w={20}><Caret /></CaretCell>
        </ToolGroup>
        <ToolGroup>
          <ToolCell $w={42}><CandleIcon /></ToolCell>
          <ToolCell $w={20}><Caret /></ToolCell>
        </ToolGroup>
        <ToolGroup><ToolCell $w={36} $strong><FaCog size={18} /></ToolCell></ToolGroup>
        <ToolGroup><ToolCell $w={40}><IndicatorIcon /></ToolCell></ToolGroup>
        <ToolGroup><ToolCell $w={40}><ScalesIcon /></ToolCell></ToolGroup>
        <ToolGroup>
          <ToolCell $w={25} $strong><FaReply size={14} /></ToolCell>
          <ToolCell $w={25}><FaShare size={14} color="#b0b3b7" /></ToolCell>
        </ToolGroup>
        <ToolGroup><ToolCell $w={29}><CornersIcon size={18} /></ToolCell></ToolGroup>
        <ToolGroup $right>
          <ToolCell $w={30}><LayoutIcon /></ToolCell>
          <CaretCell $w={15}><Caret /></CaretCell>
        </ToolGroup>
      </Toolbar>

      <ChartFrame>
        <PaneTab />
        <Chart />
        <Legend>
          <LegendToggle />
          <span>O</span><LegendValue>1.75695</LegendValue>
          <span>H</span><LegendValue>1.76494</LegendValue>
          <span>L</span><LegendValue>1.75686</LegendValue>
          <span>C</span><LegendValue>1.76148</LegendValue>
        </Legend>
        <Realtime>realtime</Realtime>
        <ZoomControls>
          <ZoomButton><ChevronLeft size={15} strokeWidth={3} /></ZoomButton>
          <ZoomButton><Minus size={15} strokeWidth={3} /></ZoomButton>
          <ZoomButton><RotateCw size={15} strokeWidth={2.500} /></ZoomButton>
          <ZoomButton><Plus size={15} strokeWidth={3} /></ZoomButton>
          <ZoomButton><ChevronRight size={15} strokeWidth={3} /></ZoomButton>
        </ZoomControls>
        <RangeBar>
          {ranges.map((r, i) => (
            <RangeItem key={r.label} $w={r.w} $last={i === ranges.length - 1}>{r.label}</RangeItem>
          ))}
          <ClockItem><b>23:24:18</b> (UTC+1)</ClockItem>
          <RangeItem $w={34}>%</RangeItem>
          <RangeItem $w={41}>log</RangeItem>
          <RangeItem $w={48} $active>auto</RangeItem>
          <RangeItem $w={40}><FaCog size={14} /></RangeItem>
          <RangeItem $w={40} $last><CornersIcon color="#5dbbe6" size={13} /></RangeItem>
        </RangeBar>
      </ChartFrame>
    </Page>
  );
}
